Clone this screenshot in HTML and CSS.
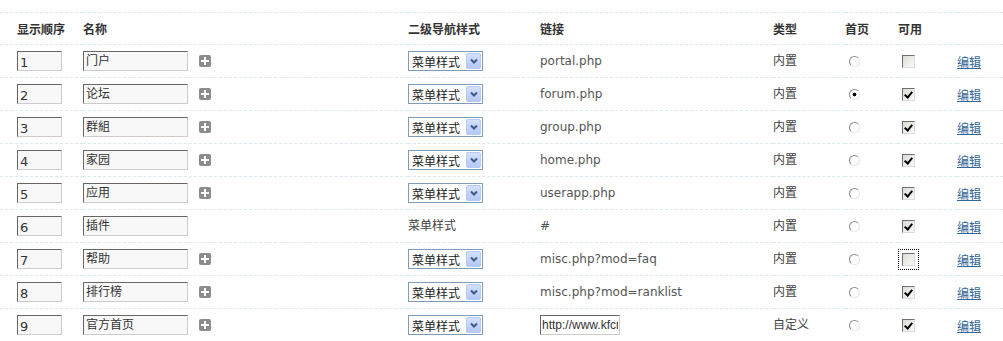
FILE: index.html
```html
<!DOCTYPE html>
<html lang="zh-CN">
    <head>
        <meta charset="UTF-8" />
        <title>导航设置</title>
        <link rel="stylesheet" href="styles.css">
    </head>
    <body>
        <div class="wrap">
            <table class="tb">
                <colgroup>
                    <col class="c-order" />
                    <col class="c-name" />
                    <col class="c-sub" />
                    <col class="c-url" />
                    <col class="c-type" />
                    <col class="c-home" />
                    <col class="c-on" />
                    <col class="c-edit" />
                </colgroup>
                <tr class="header">
                    <th class="first">显示顺序</th>
                    <th>名称</th>
                    <th>二级导航样式</th>
                    <th>链接</th>
                    <th>类型</th>
                    <th>首页</th>
                    <th>可用</th>
                    <th></th>
                </tr>
                <tr>
                    <td class="first"><input class="txt order" type="text" value="1" /></td>
                    <td><input class="txt name" type="text" value="门户" /><span class="addsub"></span></td>
                    <td><span class="sel"><select><option>菜单样式</option></select><i class="arrow"><svg width="8" height="6" viewBox="0 0 8 6"><path d="M1 1.5 L4 4.5 L7 1.5" fill="none" stroke="#3d5a8f" stroke-width="2"/></svg></i></span></td>
                    <td>portal.php</td>
                    <td class="cn">内置</td>
                    <td><input type="radio" name="home" /></td>
                    <td><input type="checkbox" /></td>
                    <td><a href="#">编辑</a></td>
                </tr>
                <tr>
                    <td class="first"><input class="txt order" type="text" value="2" /></td>
                    <td><input class="txt name" type="text" value="论坛" /><span class="addsub"></span></td>
                    <td><span class="sel"><select><option>菜单样式</option></select><i class="arrow"><svg width="8" height="6" viewBox="0 0 8 6"><path d="M1 1.5 L4 4.5 L7 1.5" fill="none" stroke="#3d5a8f" stroke-width="2"/></svg></i></span></td>
                    <td>forum.php</td>
                    <td class="cn">内置</td>
                    <td><input type="radio" name="home" checked /></td>
                    <td><input type="checkbox" checked /></td>
                    <td><a href="#">编辑</a></td>
                </tr>
                <tr>
                    <td class="first"><input class="txt order" type="text" value="3" /></td>
                    <td><input class="txt name" type="text" value="群組" /><span class="addsub"></span></td>
                    <td><span class="sel"><select><option>菜单样式</option></select><i class="arrow"><svg width="8" height="6" viewBox="0 0 8 6"><path d="M1 1.5 L4 4.5 L7 1.5" fill="none" stroke="#3d5a8f" stroke-width="2"/></svg></i></span></td>
                    <td>group.php</td>
                    <td class="cn">内置</td>
                    <td><input type="radio" name="home" /></td>
                    <td><input type="checkbox" checked /></td>
                    <td><a href="#">编辑</a></td>
                </tr>
                <tr>
                    <td class="first"><input class="txt order" type="text" value="4" /></td>
                    <td><input class="txt name" type="text" value="家园" /><span class="addsub"></span></td>
                    <td><span class="sel"><select><option>菜单样式</option></select><i class="arrow"><svg width="8" height="6" viewBox="0 0 8 6"><path d="M1 1.5 L4 4.5 L7 1.5" fill="none" stroke="#3d5a8f" stroke-width="2"/></svg></i></span></td>
                    <td>home.php</td>
                    <td class="cn">内置</td>
                    <td><input type="radio" name="home" /></td>
                    <td><input type="checkbox" checked /></td>
                    <td><a href="#">编辑</a></td>
                </tr>
                <tr>
                    <td class="first"><input class="txt order" type="text" value="5" /></td>
                    <td><input class="txt name" type="text" value="应用" /><span class="addsub"></span></td>
                    <td><span class="sel"><select><option>菜单样式</option></select><i class="arrow"><svg width="8" height="6" viewBox="0 0 8 6"><path d="M1 1.5 L4 4.5 L7 1.5" fill="none" stroke="#3d5a8f" stroke-width="2"/></svg></i></span></td>
                    <td>userapp.php</td>
                    <td class="cn">内置</td>
                    <td><input type="radio" name="home" /></td>
                    <td><input type="checkbox" checked /></td>
                    <td><a href="#">编辑</a></td>
                </tr>
                <tr>
                    <td class="first"><input class="txt order" type="text" value="6" /></td>
                    <td><input class="txt name" type="text" value="插件" /></td>
                    <td class="cn">菜单样式</td>
                    <td>#</td>
                    <td class="cn">内置</td>
                    <td><input type="radio" name="home" /></td>
                    <td><input type="checkbox" checked /></td>
                    <td><a href="#">编辑</a></td>
                </tr>
                <tr>
                    <td class="first"><input class="txt order" type="text" value="7" /></td>
                    <td><input class="txt name" type="text" value="帮助" /><span class="addsub"></span></td>
                    <td><span class="sel"><select><option>菜单样式</option></select><i class="arrow"><svg width="8" height="6" viewBox="0 0 8 6"><path d="M1 1.5 L4 4.5 L7 1.5" fill="none" stroke="#3d5a8f" stroke-width="2"/></svg></i></span></td>
                    <td>misc.php?mod=faq</td>
                    <td class="cn">内置</td>
                    <td><input type="radio" name="home" /></td>
                    <td><input class="focus" type="checkbox" /></td>
                    <td><a href="#">编辑</a></td>
                </tr>
                <tr>
                    <td class="first"><input class="txt order" type="text" value="8" /></td>
                    <td><input class="txt name" type="text" value="排行榜" /><span class="addsub"></span></td>
                    <td><span class="sel"><select><option>菜单样式</option></select><i class="arrow"><svg width="8" height="6" viewBox="0 0 8 6"><path d="M1 1.5 L4 4.5 L7 1.5" fill="none" stroke="#3d5a8f" stroke-width="2"/></svg></i></span></td>
                    <td>misc.php?mod=ranklist</td>
                    <td class="cn">内置</td>
                    <td><input type="radio" name="home" /></td>
                    <td><input type="checkbox" checked /></td>
                    <td><a href="#">编辑</a></td>
                </tr>
                <tr>
                    <td class="first"><input class="txt order" type="text" value="9" /></td>
                    <td><input class="txt name" type="text" value="官方首页" /><span class="addsub"></span></td>
                    <td><span class="sel"><select><option>菜单样式</option></select><i class="arrow"><svg width="8" height="6" viewBox="0 0 8 6"><path d="M1 1.5 L4 4.5 L7 1.5" fill="none" stroke="#3d5a8f" stroke-width="2"/></svg></i></span></td>
                    <td><input class="txt url" type="text" value="http://www.kfcm" /></td>
                    <td class="cn">自定义</td>
                    <td><input type="radio" name="home" /></td>
                    <td><input type="checkbox" checked /></td>
                    <td><a href="#">编辑</a></td>
                </tr>
            </table>
        </div>
    </body>
</html>
```

FILE: styles.css
```css
* {
    margin: 0;
    padding: 0;
    box-sizing: border-box;
}
body {
    font-family: "DejaVu Sans", "Noto Sans CJK SC", sans-serif;
    font-size: 12px;
    color: #555;
    background-color: #fff;
}
.wrap {
    padding-top: 12px;
}
.tb {
    width: 100%;
    table-layout: fixed;
    border-collapse: collapse;
}
.c-order { width: 83px; }
.c-name { width: 325px; }
.c-sub { width: 132px; }
.c-url { width: 233px; }
.c-type { width: 72px; }
.c-home { width: 53px; }
.c-on { width: 59px; }
.c-edit { width: 46px; }
.tb td,
.tb th {
    border-top: 1px dashed #dde8ee;
    height: 33px;
    vertical-align: middle;
    text-align: left;
    white-space: nowrap;
}
.tb th {
    height: 32px;
    color: #333;
    font-weight: bold;
}
.tb .first {
    padding-left: 17px;
}
.tb .cn {
    font-family: "Noto Sans CJK SC", sans-serif;
    color: #444;
    padding-bottom: 3px;
}
.txt {
    height: 20px;
    border: 1px solid;
    border-color: #666 #ccc #ccc #666;
    background-color: #f8f8f8;
    font-family: "DejaVu Sans", "Noto Sans CJK SC", sans-serif;
    font-size: 12px;
    color: #333;
    padding: 0 2px;
    vertical-align: middle;
}
.order {
    width: 45px;
    font-size: 13px;
    padding-top: 3px;
}
.name {
    width: 105px;
    padding-bottom: 3px;
}
.url {
    width: 80px;
    background-color: #fff;
    font-family: "Liberation Sans", sans-serif;
    font-size: 12px;
    padding: 0 1px;
}
.addsub {
    display: inline-block;
    width: 12px;
    height: 12px;
    margin-left: 11px;
    vertical-align: middle;
    background-color: #8c8c8c;
    border-radius: 2px;
    position: relative;
}
.addsub::before,
.addsub::after {
    content: "";
    position: absolute;
    background-color: #fff;
}
.addsub::before {
    left: 2px;
    top: 5px;
    width: 8px;
    height: 2px;
}
.addsub::after {
    left: 5px;
    top: 2px;
    width: 2px;
    height: 8px;
}
.sel {
    display: inline-block;
    position: relative;
    vertical-align: middle;
}
.sel select {
    appearance: none;
    -webkit-appearance: none;
    width: 75px;
    height: 20px;
    border: 1px solid #7f9db9;
    background-color: #fff;
    font-family: "Noto Sans CJK SC", sans-serif;
    font-size: 12px;
    color: #222;
    padding: 0 0 0 3px;
    border-radius: 0;
    display: block;
}
.sel .arrow {
    position: absolute;
    right: 2px;
    top: 2px;
    width: 15px;
    height: 16px;
    border: 1px solid #b9cbf3;
    border-radius: 2px;
    background: linear-gradient(#d4e0fb, #b5c8f5);
    display: flex;
    align-items: center;
    justify-content: center;
    pointer-events: none;
}
input[type="radio"] {
    appearance: none;
    -webkit-appearance: none;
    width: 11px;
    height: 11px;
    margin-left: 4px;
    border: 1px solid;
    border-color: #8a8a8a #e6e6e6 #e6e6e6 #8a8a8a;
    border-radius: 50%;
    background-color: #fff;
    vertical-align: middle;
}
input[type="radio"]:checked {
    background: radial-gradient(circle, #000 0, #000 1.6px, #fff 2.2px);
}
input[type="checkbox"] {
    appearance: none;
    -webkit-appearance: none;
    width: 13px;
    height: 13px;
    margin-left: 4px;
    border: 1px solid;
    border-color: #707070 #dcdcdc #dcdcdc #707070;
    background: linear-gradient(135deg, #dcdcd6, #fafafa);
    vertical-align: middle;
    position: relative;
}
input[type="checkbox"]:checked::after {
    content: "";
    position: absolute;
    left: 3px;
    top: 1px;
    width: 3px;
    height: 6px;
    border: solid #000;
    border-width: 0 2px 2px 0;
    transform: rotate(40deg);
}
input.focus {
    outline: 1px dotted #000;
    outline-offset: 3px;
}
.tb a {
    color: #336699;
    text-decoration: underline;
}
```
